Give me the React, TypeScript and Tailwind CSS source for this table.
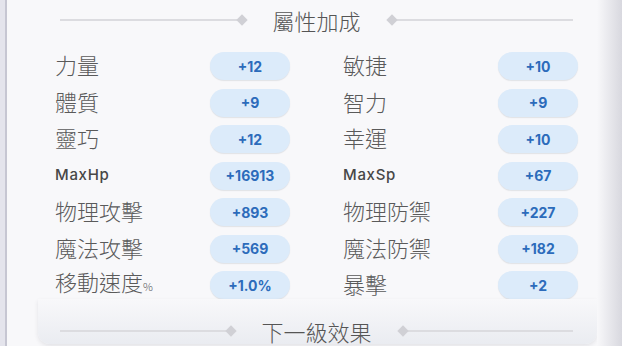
import React from "react";

const cjk = { fontFamily: '"Noto Sans CJK TC", "Noto Sans", sans-serif' };
const latin = { fontFamily: 'Inter, "Open Sans", sans-serif' };

type Row = [string, string, string, string];

const rows: Row[] = [
  ["力量", "+12", "敏捷", "+10"],
  ["體質", "+9", "智力", "+9"],
  ["靈巧", "+12", "幸運", "+10"],
  ["MaxHp", "+16913", "MaxSp", "+67"],
  ["物理攻擊", "+893", "物理防禦", "+227"],
  ["魔法攻擊", "+569", "魔法防禦", "+182"],
  ["移動速度%", "+1.0%", "暴擊", "+2"],
];

function Divider({ title }: { title: string }) {
  return (
    <div className="flex w-[513px] items-center">
      <div className="h-[2px] flex-1 bg-[#dcdce0]" />
      <div className="h-[8px] w-[8px] rotate-45 bg-[#d0d0d5]" />
      <div
        className="mx-[27px] text-[22px] font-light leading-[24px] text-[#555555]"
        style={cjk}
      >
        {title}
      </div>
      <div className="h-[8px] w-[8px] rotate-45 bg-[#d0d0d5]" />
      <div className="h-[2px] flex-1 bg-[#dcdce0]" />
    </div>
  );
}

function Label({ text }: { text: string }) {
  if (text.startsWith("Max")) {
    return (
      <span
        className="text-[15px] font-medium tracking-[0.7px] text-[#474747]"
        style={latin}
      >
        {text}
      </span>
    );
  }
  if (text.endsWith("%")) {
    return (
      <span
        className="pb-[4px] text-[22px] font-light leading-[28px] text-[#5a5a5a]"
        style={cjk}
      >
        {text.slice(0, -1)}
        <span className="text-[11px]">%</span>
      </span>
    );
  }
  return (
    <span
      className="pb-[4px] text-[22px] font-light leading-[28px] text-[#5a5a5a]"
      style={cjk}
    >
      {text}
    </span>
  );
}

function Pill({ value }: { value: string }) {
  return (
    <div
      className="flex h-[28px] w-[80px] items-center justify-center rounded-full bg-[#dcebfa] text-[14px] font-bold text-[#2c6bbb] shadow-[0_1px_1px_rgba(60,70,90,0.12)]"
      style={latin}
    >
      {value}
    </div>
  );
}

export default function App() {
  return (
    <div className="flex h-[346px] w-[622px] overflow-hidden bg-[#f8f8fa]">
      <div className="w-[5px] bg-[#e4e4ec]" />
      <div className="w-[2px] bg-[#c6c6d2]" />
      <div className="flex w-[590px] flex-col">
        <div className="flex h-[40px] items-center pl-[53px]">
          <Divider title="屬性加成" />
        </div>
        <div className="mt-[12px] flex flex-col gap-y-[8.5px]">
          {rows.map((r, i) => (
            <div key={i} className="flex h-[28px] items-center pl-[48px]">
              <div className="flex w-[155px] items-center">
                <Label text={r[0]} />
              </div>
              <Pill value={r[1]} />
              <div className="ml-[53px] flex w-[155px] items-center">
                <Label text={r[2]} />
              </div>
              <Pill value={r[3]} />
            </div>
          ))}
        </div>
        <div className="ml-[31px] h-[45px] w-[559px] rounded-b-[12px] bg-gradient-to-b from-[#f8f8fa] to-[#eaecf1] pl-[22px] pt-[20px] shadow-[0_2px_4px_rgba(40,40,60,0.10)]">
          <Divider title="下一級效果" />
        </div>
      </div>
      <div className="flex-1 bg-gradient-to-r from-[#f8f8fa] to-[#d8d8df]" />
    </div>
  );
}
